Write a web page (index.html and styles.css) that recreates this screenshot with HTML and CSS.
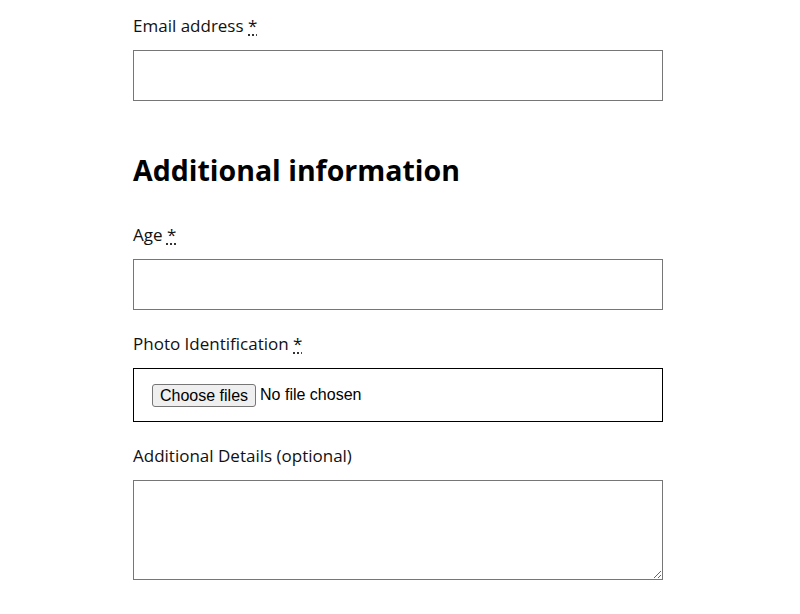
FILE: index.html
```html
<!DOCTYPE html>
<html lang="en">
<head>
<meta charset="utf-8">
<title>Form</title>
<link rel="stylesheet" href="styles.css">
</head>
<body>
<form class="form">
  <div class="field">
    <label class="label" for="email">Email address <abbr class="req" title="required">*</abbr></label>
    <input class="input" id="email" type="email">
  </div>

  <h2 class="heading">Additional information</h2>

  <div class="field">
    <label class="label" for="age">Age <abbr class="req" title="required">*</abbr></label>
    <input class="input" id="age" type="text">
  </div>

  <div class="field">
    <label class="label" for="photo">Photo Identification <abbr class="req" title="required">*</abbr></label>
    <label class="filebox">
      <input class="file-input" id="photo" type="file" multiple>
      <span class="file-btn">Choose files</span>
      <span class="file-status">No file chosen</span>
    </label>
  </div>

  <div class="field">
    <label class="label" for="details">Additional Details (optional)</label>
    <textarea class="textarea" id="details"></textarea>
  </div>
</form>
</body>
</html>
```

FILE: styles.css
```css
html, body {
  margin: 0;
  padding: 0;
  background: #fff;
}

body {
  font-family: "Open Sans", "Noto Sans", sans-serif;
  color: #111;
}

.form {
  width: 530px;
  margin-left: 133px;
  padding-top: 12px;
}

.field {
  display: flex;
  flex-direction: column;
  margin-bottom: 20px;
}

.label {
  display: block;
  font-size: 17px;
  line-height: 27px;
  margin-bottom: 11px;
}

.req {
  text-decoration: underline dotted;
  text-underline-offset: 3px;
  cursor: help;
}

.input {
  box-sizing: border-box;
  width: 100%;
  height: 51px;
  margin: 0;
  border: 1px solid #767676;
  border-radius: 0;
  font: inherit;
  padding: 0 10px;
}

.heading {
  font-size: 28.5px;
  font-weight: 700;
  line-height: 36px;
  color: #000;
  margin: 51px 0 33px;
}

.filebox {
  box-sizing: border-box;
  display: flex;
  align-items: center;
  gap: 4px;
  height: 54px;
  padding: 0 18px;
  border: 1px solid #000;
  font-family: "Liberation Sans", Arial, sans-serif;
  font-size: 16px;
  color: #000;
}

.file-input {
  display: none;
}

.file-btn {
  box-sizing: border-box;
  height: 23px;
  line-height: 21px;
  padding: 0 7px;
  background: #efefef;
  border: 1px solid #767676;
  border-radius: 3px;
}

.textarea {
  box-sizing: border-box;
  width: 100%;
  height: 100px;
  margin: 0;
  border: 1px solid #767676;
  font: inherit;
}
```
